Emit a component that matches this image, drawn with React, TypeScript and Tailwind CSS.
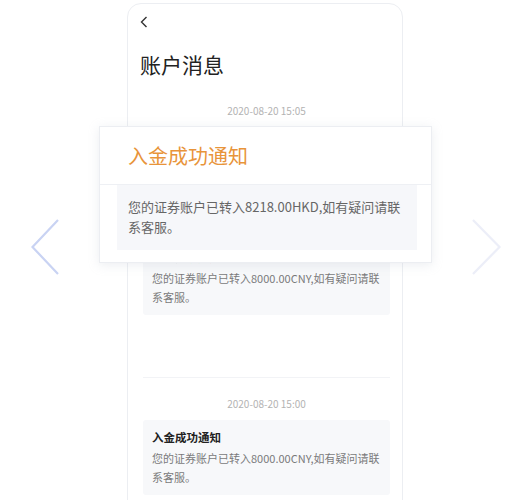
import type { ReactNode } from 'react'

const font = { fontFamily: '"Noto Sans CJK SC", "Noto Sans", sans-serif' }

export default function App() {
  return (
    <div style={font} className="relative flex h-[500px] w-[530px] overflow-hidden bg-white">
      <div className="w-[127px] shrink-0 pl-[31px] pt-[218px]">
        <svg width="30" height="58" viewBox="0 0 30 58" fill="none">
          <path d="M27 2 L1.5 29 L27 56" stroke="#c9d3f3" strokeWidth="2.2" />
        </svg>
      </div>

      <PhoneScreen />

      <div className="w-[127px] shrink-0 pl-[67px] pt-[218px]">
        <svg width="32" height="58" viewBox="0 0 32 58" fill="none">
          <path d="M3 2 L29.5 29 L3 56" stroke="#eceef8" strokeWidth="2.2" />
        </svg>
      </div>

      <Popup />
    </div>
  )
}

function PhoneScreen() {
  return (
    <div className="mt-[3px] h-[560px] w-[276px] shrink-0 rounded-t-[14px] border border-[#eceef2] bg-white">
      <div className="flex flex-col pl-[15px] pr-[12px]">
        <svg className="ml-[-3px] mt-[12px]" width="8" height="12" viewBox="0 0 8 12" fill="none">
          <path d="M6.5 1 L1.5 6 L6.5 11" stroke="#333" strokeWidth="1.4" />
        </svg>
        <h1 className="ml-[-3px] mt-[25px] text-[21px] leading-[22px] font-normal text-[#222]">账户消息</h1>

        <Stamp className="mt-[29px]">2020-08-20 15:05</Stamp>
        <MessageBox className="mt-[10px]" amount="8218.00HKD" />

        <Stamp className="mt-[12px]">2020-08-20 15:03</Stamp>
        <MessageBox className="mt-[11px]" amount="8000.00CNY" />

        <div className="mt-[62px] h-px bg-[#f2f3f6]" />

        <Stamp className="mt-[19px]">2020-08-20 15:00</Stamp>
        <MessageBox className="mt-[9px]" amount="8000.00CNY" />
      </div>
    </div>
  )
}

function Stamp({ className, children }: { className: string; children: ReactNode }) {
  return (
    <p className={`${className} text-center text-[10px] leading-[14px] text-[#b3b3b3]`}>{children}</p>
  )
}

function MessageBox({ className, amount }: { className: string; amount: string }) {
  return (
    <div className={`${className} h-[75px] rounded-[3px] bg-[#f7f8fa] pl-[9px] pt-[9px]`}>
      <p className="text-[11.5px] leading-[16px] font-semibold text-[#222]">入金成功通知</p>
      <p className="mt-[3.5px] text-[11px] leading-[19px] text-[#7a7a7a]">
        <span className="block whitespace-nowrap">您的证券账户已转入{amount},如有疑问请联</span>
        <span className="block">系客服。</span>
      </p>
    </div>
  )
}

function Popup() {
  return (
    <div className="absolute left-[99px] top-[126px] h-[137px] w-[333px] border border-[#eceef2] bg-white shadow-[0_2px_10px_rgba(180,186,200,0.25)]">
      <div className="flex h-[58px] items-center border-b border-[#eef0f4] pl-[28px]">
        <p className="text-[20px] leading-[28px] text-[#e8943a]">入金成功通知</p>
      </div>
      <div className="ml-[17px] mr-[14px] bg-[#f6f7fa] pb-[13px] pl-[11px] pt-[12px]">
        <p className="text-[13px] leading-[20px] text-[#666]">
          <span className="block whitespace-nowrap">您的证券账户已转入8218.00HKD,如有疑问请联</span>
          <span className="block">系客服。</span>
        </p>
      </div>
    </div>
  )
}
